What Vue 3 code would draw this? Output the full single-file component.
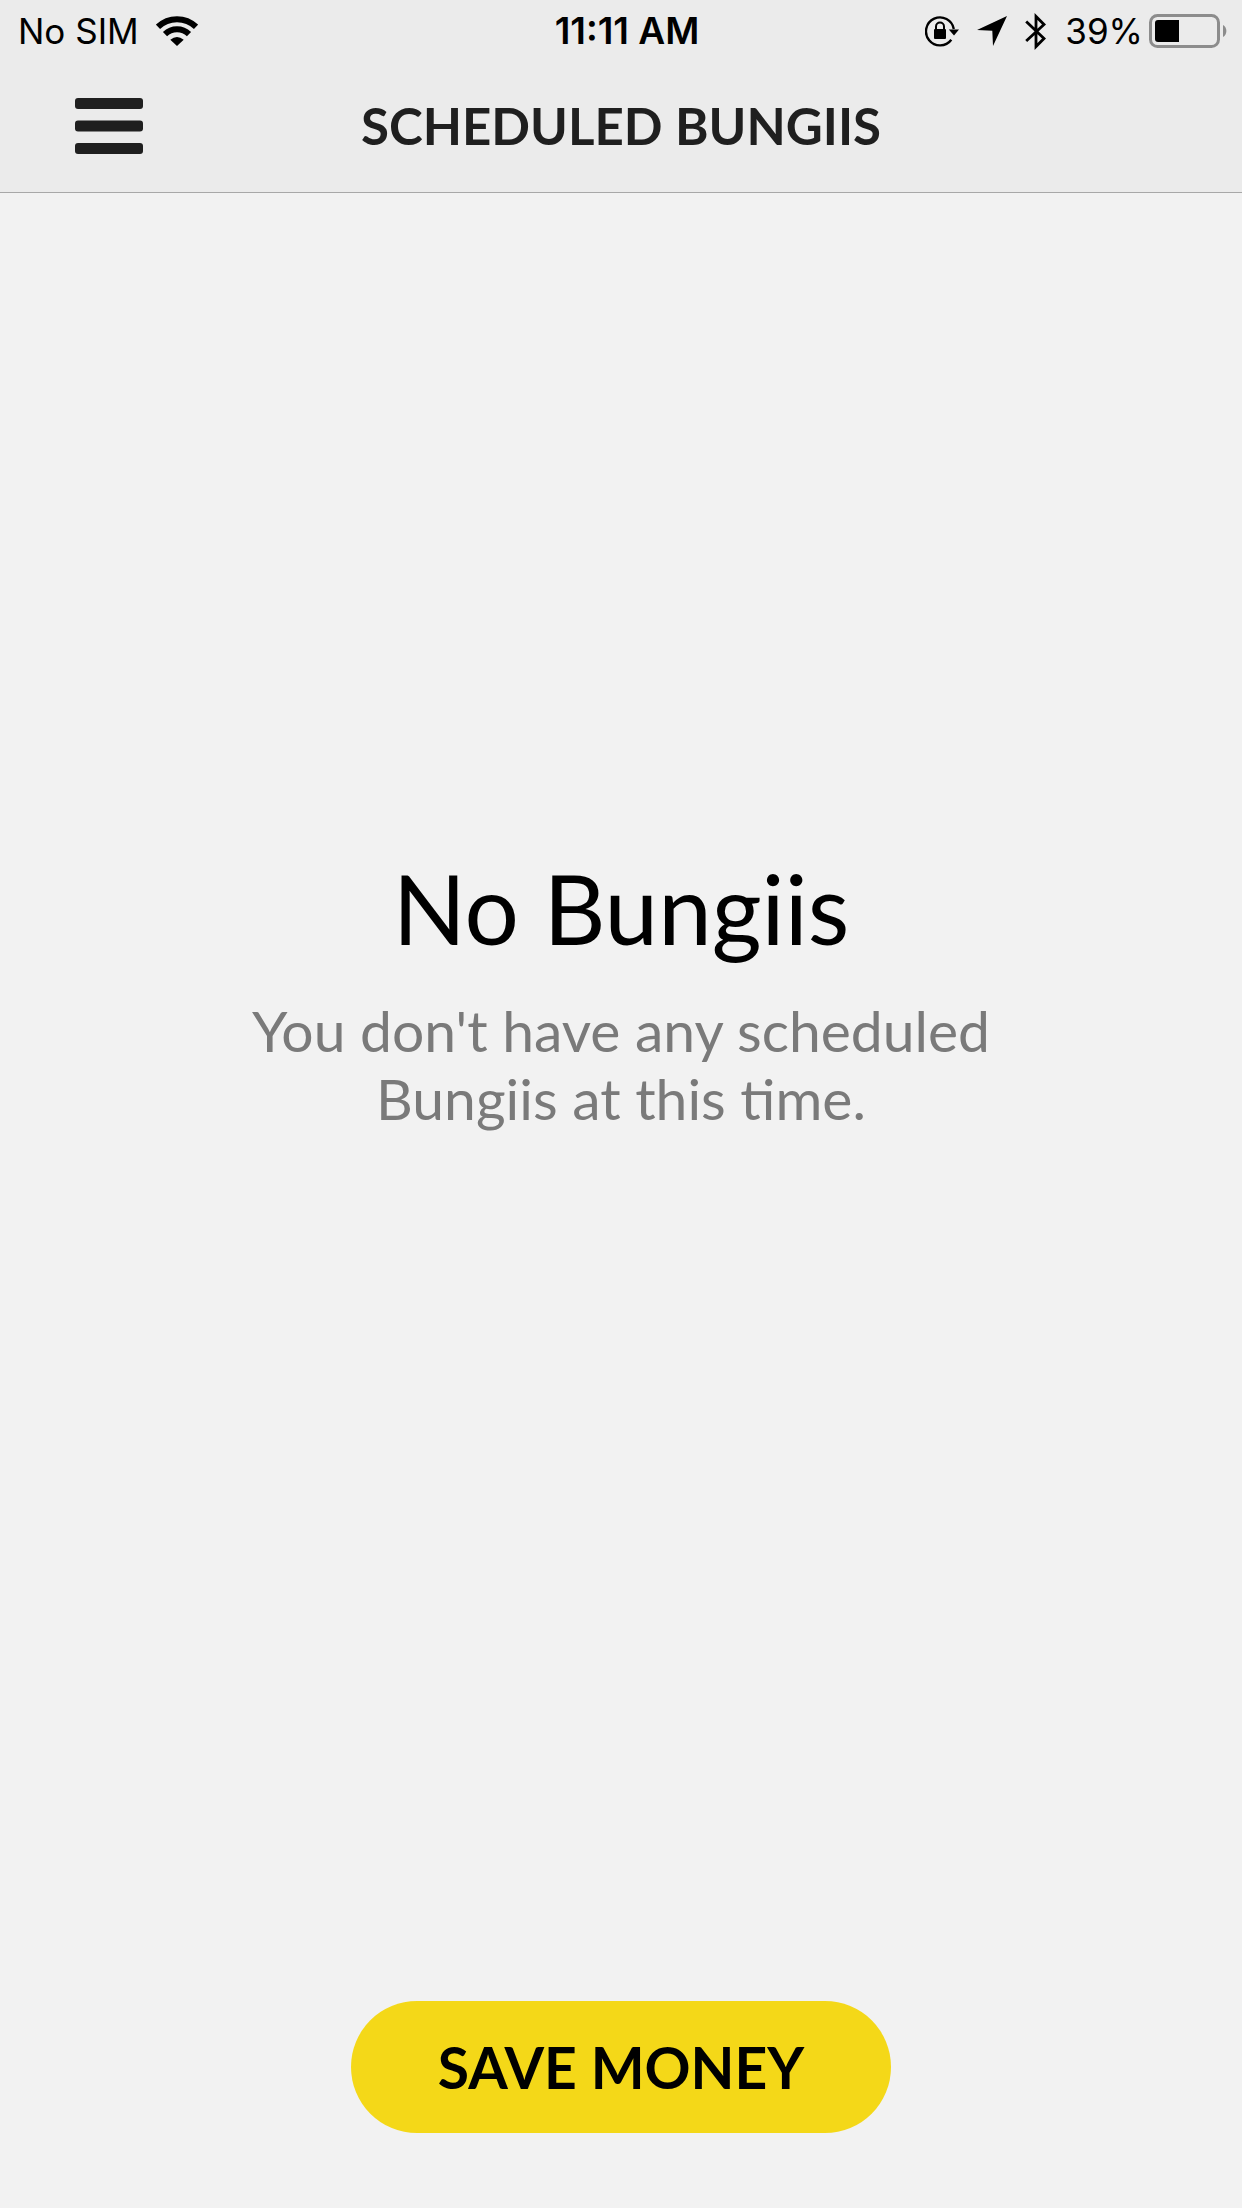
<script setup>
import { ref } from 'vue'

const battery = ref(39)
const menuOpen = ref(false)
</script>

<template>
  <div class="screen">
    <header class="top">
      <div class="status">
        <div class="side">
          <span>No SIM</span>
          <svg class="wifi" width="42" height="30" viewBox="0 0 42 30" aria-label="Wi-Fi">
            <g fill="none" stroke="#000" stroke-width="6">
              <path d="M2 10.800A27.500 27.500 0 0 1 40 10.800" />
              <path d="M9 18.200A17.300 17.300 0 0 1 33 18.200" />
            </g>
            <path d="M14.300 23.800Q21 18 27.700 23.800L21 30Z" />
          </svg>
        </div>
        <time class="clock">11:11 AM</time>
        <div class="side end">
          <svg width="34" height="32" viewBox="0 0 34 32" aria-label="Rotation lock">
            <path d="M26.300 24.700A14 14 0 1 1 28.800 14" fill="none" stroke="#000" stroke-width="2.400" />
            <path d="M23.800 14.600H34L29 20.500Z" />
            <rect x="9" y="14" width="12" height="10" rx="1" />
            <path d="M11 15V11.500a4 4 0 0 1 8 0V15" fill="none" stroke="#000" stroke-width="2" />
          </svg>
          <svg class="arrow" width="30" height="30" viewBox="0 0 30 30" aria-label="Location">
            <path d="M30 0L16 30L15.300 14.800L0 14Z" />
          </svg>
          <svg class="bluetooth" width="22" height="37" viewBox="0 0 22 37" aria-label="Bluetooth">
            <path d="M1.200 8.500L19 25.500L11 33.500V3.500L19 11.500L1.200 28" fill="none" stroke="#000" stroke-width="2.800" />
          </svg>
          <span class="percent">{{ battery }}%</span>
          <svg class="battery" width="79" height="34" viewBox="0 0 79 34" aria-label="Battery">
            <rect x="1.500" y="1.500" width="68" height="31" rx="7" fill="none" stroke="#8c8c8c" stroke-width="3" />
            <path d="M74 11A7 7 0 0 1 74 23Z" fill="#8c8c8c" />
            <path d="M30 6V28H9a3 3 0 0 1-3-3V9a3 3 0 0 1 3-3Z" />
          </svg>
        </div>
      </div>
      <div class="nav">
        <button class="menu" type="button" aria-label="Menu" :aria-expanded="menuOpen" @click="menuOpen = !menuOpen">
          <svg width="68" height="56" viewBox="0 0 68 56" fill="#1f1f1f">
            <rect width="68" height="11" rx="3" />
            <rect y="22.500" width="68" height="11" rx="3" />
            <rect y="45" width="68" height="11" rx="3" />
          </svg>
        </button>
        <h1>SCHEDULED BUNGIIS</h1>
      </div>
    </header>

    <main class="empty">
      <h2>No Bungiis</h2>
      <p>You don't have any scheduled Bungiis at this time.</p>
    </main>

    <footer class="actions">
      <button class="save" type="button">SAVE MONEY</button>
    </footer>
  </div>
</template>

<style>
body {
  background: #f2f2f2;
}
</style>

<style scoped>
.screen {
  display: flex;
  flex-direction: column;
  min-height: 100vh;
  background: #f2f2f2;
  color: #000;
  font-family: Lato, sans-serif;
}

.top {
  background: #ebebeb;
  border-bottom: 1px solid #a8a8a8;
}

.status {
  display: grid;
  grid-template-columns: 1fr auto 1fr;
  align-items: center;
  height: 60px;
  padding: 0 14px 0 18px;
  font: 400 35px/62px Inter, sans-serif;
}

.side {
  display: flex;
  align-items: center;
}

.end {
  justify-content: flex-end;
}

.wifi {
  margin-left: 17px;
}

.clock {
  font-size: 37px;
  font-weight: 600;
  padding-left: 8px;
}

.arrow {
  margin-left: 18px;
}

.bluetooth {
  margin-left: 18px;
}

.percent {
  margin-left: 18px;
}

.battery {
  margin-left: 6px;
}

.nav {
  display: grid;
  grid-template-columns: 1fr auto 1fr;
  align-items: center;
  height: 132px;
  padding: 0 75px;
}

.menu {
  justify-self: start;
  padding: 0;
  border: 0;
  background: none;
}

.menu svg {
  display: block;
}

h1 {
  margin: 0;
  color: #1f1f1f;
  font-size: 51px;
  font-weight: 700;
  line-height: 66px;
}

.empty {
  display: flex;
  flex: 1;
  flex-direction: column;
  align-items: center;
  justify-content: center;
  gap: 31px;
  padding: 0 75px 212px;
  text-align: center;
}

h2 {
  margin: 0;
  font-size: 96px;
  font-weight: 400;
  line-height: 115px;
}

p {
  max-width: 800px;
  margin: 0;
  color: #7a7a7a;
  font-size: 57px;
  line-height: 68px;
}

.actions {
  display: flex;
  justify-content: center;
  padding-bottom: 75px;
}

.save {
  width: 540px;
  height: 132px;
  border: 0;
  border-radius: 66px;
  background: #f4d818;
  color: #000;
  font: 700 57px/68px Lato, sans-serif;
}
</style>
